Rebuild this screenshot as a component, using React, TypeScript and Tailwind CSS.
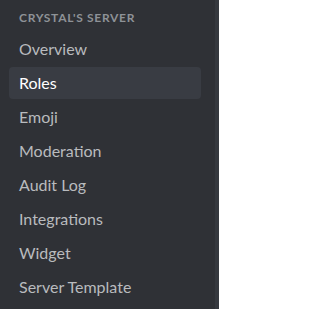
import React from "react";

const items = [
  "Overview",
  "Roles",
  "Emoji",
  "Moderation",
  "Audit Log",
  "Integrations",
  "Widget",
  "Server Template",
];

export default function App() {
  return (
    <div className="flex w-[219px] h-[309px] overflow-hidden bg-[#2f3136] font-[Lato,sans-serif]">
      <div className="w-[215px] shrink-0 pl-[9px] pr-[14px] pt-[10px]">
        <div className="px-[10px] h-[16px] leading-[16px] text-[12px] font-bold uppercase tracking-[0.7px] text-[#8e9297] mb-[7px] whitespace-nowrap">
          Crystal's Server
        </div>
        <div className="flex flex-col gap-[2px]">
          {items.map((it) => {
            const sel = it === "Roles";
            return (
              <div
                key={it}
                className={
                  sel
                    ? "h-[32px] flex items-center px-[10px] rounded-[4px] bg-[#393c43] text-white text-[16px] leading-[20px]"
                    : "h-[32px] flex items-center px-[10px] rounded-[4px] text-[#b9bbbe] text-[16px] leading-[20px]"
                }
              >
                {it}
              </div>
            );
          })}
        </div>
      </div>
      <div className="flex-1 bg-[#36393f]" />
    </div>
  );
}
